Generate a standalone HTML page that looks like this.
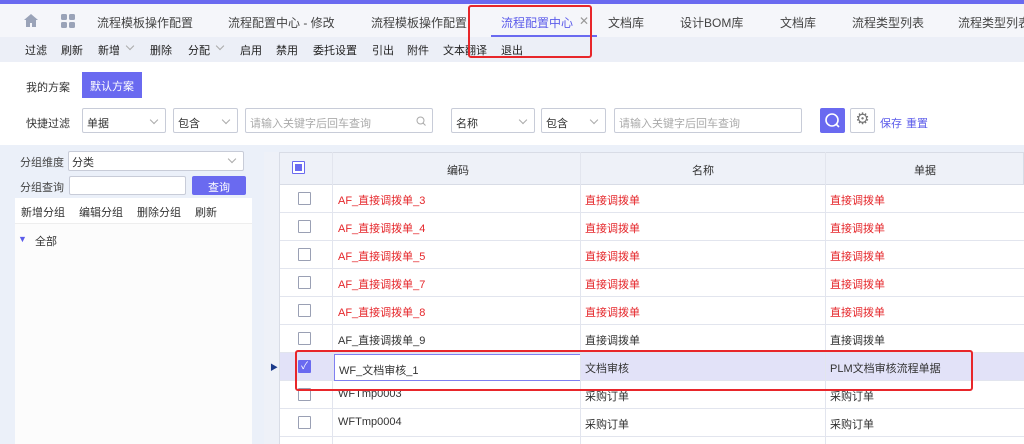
<!DOCTYPE html><html><head><meta charset="utf-8"><style>
*{box-sizing:border-box;margin:0;padding:0}
body{width:1024px;height:444px;overflow:hidden;background:#ebf0f9;font-family:"Liberation Sans","Noto Sans CJK SC",sans-serif;font-size:11px;color:#333;position:relative}
.a{position:absolute}
.top{left:0;top:0;width:1024px;height:4px;background:#6a6af0}
.tabs{left:0;top:4px;width:1024px;height:33px;background:#f5f6fa}
.tabs span{position:absolute;top:10px;font-size:12px;color:#444}
.tb{left:0;top:37px;width:1024px;height:25px;background:#eceff7}
.tb span{position:absolute;top:5px;font-size:11px;color:#222}
.wh{left:0;top:62px;width:1024px;height:83px;background:#fff}
.sel{position:absolute;height:25px;border:1px solid #c8ccd8;background:#fff;border-radius:2px;font-size:11px;padding:6px 0 0 4px}
.ph{color:#aaa}
.chev{position:absolute;right:8px;top:8px;width:6px;height:6px;border-right:1px solid #aaa;border-bottom:1px solid #aaa;transform:rotate(45deg)}
.cb{position:absolute;width:13px;height:13px;border:1px solid #9aa0b4;background:#fff;border-radius:1px}
.row{position:absolute;left:280px;width:744px;height:28px;border-bottom:1px solid #e2e5ee;background:#fff}
.row span{position:absolute;top:7px}
.r{color:#e5262a}
</style></head><body>
<div class="a top"></div>
<div class="a tabs">
<svg class="a" style="left:24px;top:10px" width="14" height="13" viewBox="0 0 14 13"><path d="M7 0L0 6h2v7h4V9h2v4h4V6h2z" fill="#9aa3b8"/></svg>
<svg class="a" style="left:61px;top:10px" width="14" height="14"><rect x="0" y="0" width="6" height="6" rx="1.5" fill="#9aa3b8"/><rect x="8" y="0" width="6" height="6" rx="1.5" fill="#9aa3b8"/><rect x="0" y="8" width="6" height="6" rx="1.5" fill="#9aa3b8"/><rect x="8" y="8" width="6" height="6" rx="1.5" fill="#9aa3b8"/></svg>
<span style="left:97px">流程模板操作配置</span><span style="left:228px">流程配置中心 - 修改</span><span style="left:371px">流程模板操作配置</span>
<span style="left:501px;color:#5b5bea">流程配置中心</span><span style="left:579px;color:#999">✕</span>
<div class="a" style="left:491px;top:31px;width:106px;height:2px;background:#6a6af0"></div>
<span style="left:608px">文档库</span><span style="left:680px">设计BOM库</span><span style="left:780px">文档库</span><span style="left:852px">流程类型列表</span><span style="left:958px;white-space:nowrap">流程类型列表</span>
</div>
<div class="a tb">
<span style="left:25px">过滤</span><span style="left:61px">刷新</span><span style="left:98px">新增</span><i class="chev" style="left:127px;top:6px"></i><span style="left:150px">删除</span><span style="left:188px">分配</span><i class="chev" style="left:217px;top:6px"></i><span style="left:240px">启用</span><span style="left:276px">禁用</span><span style="left:313px">委托设置</span><span style="left:372px">引出</span><span style="left:407px">附件</span><span style="left:443px">文本翻译</span><span style="left:501px">退出</span>
</div>
<div class="a wh">
<span class="a" style="left:26px;top:17px">我的方案</span>
<div class="a" style="left:82px;top:10px;width:60px;height:26px;background:#6a6af0;color:#fff;padding:6px 0 0 8px">默认方案</div>
<span class="a" style="left:26px;top:53px">快捷过滤</span>
<div class="sel" style="left:82px;top:46px;width:84px">单据<i class="chev"></i></div>
<div class="sel" style="left:173px;top:46px;width:65px">包含<i class="chev"></i></div>
<div class="sel ph" style="left:245px;top:46px;width:188px">请输入关键字后回车查询<svg class="a" style="right:6px;top:7px" width="10" height="10"><circle cx="4.5" cy="4.5" r="3.5" fill="none" stroke="#aaa"/><path d="M7 7l2.5 2.5" stroke="#aaa"/></svg></div>
<div class="sel" style="left:451px;top:46px;width:84px">名称<i class="chev"></i></div>
<div class="sel" style="left:541px;top:46px;width:65px">包含<i class="chev"></i></div>
<div class="sel ph" style="left:614px;top:46px;width:188px">请输入关键字后回车查询</div>
<div class="a" style="left:820px;top:46px;width:25px;height:25px;background:#6a6af0;border-radius:2px"><svg width="25" height="25"><circle cx="12" cy="12" r="6" fill="none" stroke="#fff" stroke-width="1.6"/><path d="M16 16l3 3" stroke="#fff" stroke-width="1.6"/></svg></div>
<div class="a" style="left:850px;top:46px;width:25px;height:25px;border:1px solid #c8ccd8;border-radius:2px;text-align:center;color:#777;font-size:16px;line-height:22px">⚙</div>
<span class="a" style="left:880px;top:53px;color:#5b5bea">保存</span><span class="a" style="left:906px;top:53px;color:#5b5bea">重置</span>
</div>
<!-- left panel -->
<span class="a" style="left:20px;top:154px;color:#444">分组维度</span>
<div class="sel" style="left:68px;top:151px;width:176px;height:20px;padding:2px 0 0 3px">分类<i class="chev" style="top:4px"></i></div>
<span class="a" style="left:20px;top:179px;color:#444">分组查询</span>
<div class="sel" style="left:69px;top:176px;width:117px;height:19px"></div>
<div class="a" style="left:192px;top:176px;width:54px;height:19px;background:#6a6af0;color:#fff;text-align:center;padding-top:3px;border-radius:2px">查询</div>
<div class="a" style="left:15px;top:198px;width:237px;height:246px;background:#fcfcfc"></div>
<div class="a" style="left:15px;top:198px;width:237px;height:26px;background:#fff;border-bottom:1px solid #eee"></div>
<span class="a" style="left:21px;top:204px">新增分组</span><span class="a" style="left:79px;top:204px">编辑分组</span><span class="a" style="left:137px;top:204px">删除分组</span><span class="a" style="left:195px;top:204px">刷新</span>
<span class="a" style="left:18px;top:234px;color:#5b5bea;font-size:9px">▼</span><span class="a" style="left:35px;top:233px">全部</span>
<!-- grid -->
<div class="a" style="left:264px;top:152px;width:760px;height:292px;background:#fff;border-left:1px solid #d8dce6"></div>
<div class="a" style="left:264px;top:152px;width:760px;height:33px;background:#eef1f8;border:1px solid #d8dce6"></div>
<div class="a" style="left:264px;top:152px;width:16px;height:292px;background:#eef1f8;border-right:1px solid #d8dce6"></div>
<div class="cb" style="left:292px;top:161px;border-color:#6a6af0"><div style="margin:2px;width:7px;height:7px;background:#6a6af0"></div></div>
<span class="a" style="left:447px;top:162px">编码</span><span class="a" style="left:692px;top:162px">名称</span><span class="a" style="left:914px;top:162px">单据</span>
<div class="row" style="top:185px"><span class="r" style="left:58px">AF_直接调拨单_3</span><span class="r" style="left:305px">直接调拨单</span><span class="r" style="left:550px">直接调拨单</span></div>
<div class="row" style="top:213px"><span class="r" style="left:58px">AF_直接调拨单_4</span><span class="r" style="left:305px">直接调拨单</span><span class="r" style="left:550px">直接调拨单</span></div>
<div class="row" style="top:241px"><span class="r" style="left:58px">AF_直接调拨单_5</span><span class="r" style="left:305px">直接调拨单</span><span class="r" style="left:550px">直接调拨单</span></div>
<div class="row" style="top:269px"><span class="r" style="left:58px">AF_直接调拨单_7</span><span class="r" style="left:305px">直接调拨单</span><span class="r" style="left:550px">直接调拨单</span></div>
<div class="row" style="top:297px"><span class="r" style="left:58px">AF_直接调拨单_8</span><span class="r" style="left:305px">直接调拨单</span><span class="r" style="left:550px">直接调拨单</span></div>
<div class="row" style="top:325px"><span style="left:58px">AF_直接调拨单_9</span><span style="left:305px">直接调拨单</span><span style="left:550px">直接调拨单</span></div>
<div class="row" style="top:353px;background:#e2e2f8"><span style="left:305px">文档审核</span><span style="left:550px">PLM文档审核流程单据</span></div>
<div class="a" style="left:334px;top:354px;width:247px;height:27px;background:#fff;border:1px solid #8080f0;padding:7px 0 0 4px">WF_文档审核_1</div>
<div class="row" style="top:381px"><span style="left:58px">WFTmp0003</span><span style="left:305px">采购订单</span><span style="left:550px">采购订单</span></div>
<div class="row" style="top:409px"><span style="left:58px">WFTmp0004</span><span style="left:305px">采购订单</span><span style="left:550px">采购订单</span></div>
<div class="a" style="left:332px;top:152px;width:1px;height:292px;background:#e2e5ee"></div>
<div class="a" style="left:580px;top:152px;width:1px;height:292px;background:#e2e5ee"></div>
<div class="a" style="left:825px;top:152px;width:1px;height:292px;background:#e2e5ee"></div>
<div class="cb" style="left:298px;top:192px"></div><div class="cb" style="left:298px;top:220px"></div><div class="cb" style="left:298px;top:248px"></div><div class="cb" style="left:298px;top:276px"></div><div class="cb" style="left:298px;top:304px"></div><div class="cb" style="left:298px;top:332px"></div>
<div class="cb" style="left:298px;top:360px;background:#6a6af0;border-color:#6a6af0;color:#fff;font-size:10px;line-height:11px;text-align:center">✓</div>
<div class="cb" style="left:298px;top:388px"></div><div class="cb" style="left:298px;top:416px"></div>
<span class="a" style="left:270px;top:362px;font-size:8px;color:#1a3a8a">▶</span>
<div class="a" style="left:468px;top:5px;width:124px;height:53px;border:2px solid #e8262a;border-radius:3px"></div>
<div class="a" style="left:295px;top:350px;width:678px;height:41px;border:2px solid #e8262a;border-radius:3px"></div>
</body></html>
